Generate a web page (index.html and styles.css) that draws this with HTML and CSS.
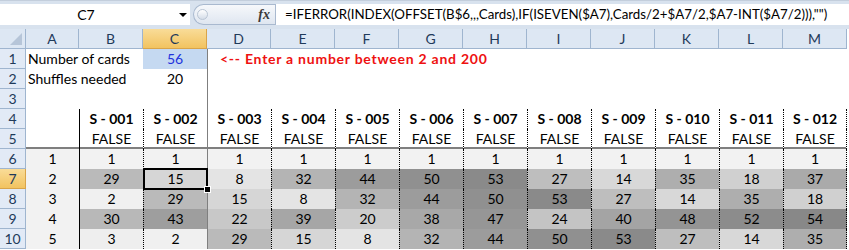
FILE: index.html
```html
<!DOCTYPE html>
<html lang="en">
<head>
    <meta charset="UTF-8">
    <meta name="viewport" content="width=device-width, initial-scale=1.0">
    <title>Card Shuffles</title>
    <link rel="stylesheet" href="styles.css">
</head>
<body>
    <div class="formula-bar">
        <div class="name-box">
            <span class="name">C7</span>
            <span class="drop"></span>
        </div>
        <div class="fx-box">
            <span class="knob"></span>
            <span class="fx">fx</span>
        </div>
        <div class="formula">=IFERROR(INDEX(OFFSET(B$6,,,Cards),IF(ISEVEN($A7),Cards/2+$A7/2,$A7-INT($A7/2))),"")</div>
    </div>

    <div class="sheet">
        <!-- column headers -->
        <div class="corner">
            <svg width="12" height="12" viewBox="0 0 12 12"><polygon points="12,0 12,12 0,12" fill="#b6c5d8"/></svg>
        </div>
        <div class="ch">A</div>
        <div class="ch">B</div>
        <div class="ch active">C</div>
        <div class="ch">D</div>
        <div class="ch">E</div>
        <div class="ch">F</div>
        <div class="ch">G</div>
        <div class="ch">H</div>
        <div class="ch">I</div>
        <div class="ch">J</div>
        <div class="ch">K</div>
        <div class="ch">L</div>
        <div class="ch">M</div>

        <!-- row 1 -->
        <div class="rh">1</div>
        <div class="cell l span2">Number of cards</div>
        <div class="cell c input">56</div>
        <div class="cell gl note span10">&lt;-- Enter a number between 2 and 200</div>

        <!-- row 2 -->
        <div class="rh">2</div>
        <div class="cell l span2">Shuffles needed</div>
        <div class="cell c">20</div>
        <div class="cell gl span10"></div>

        <!-- row 3 -->
        <div class="rh">3</div>
        <div class="cell span3"></div>
        <div class="cell gl span10"></div>

        <!-- row 4 -->
        <div class="rh">4</div>
        <div class="cell"></div>
        <div class="cell c b sl">S - 001</div>
        <div class="cell c b dl">S - 002</div>
        <div class="cell c b gl">S - 003</div>
        <div class="cell c b dl">S - 004</div>
        <div class="cell c b dl">S - 005</div>
        <div class="cell c b dl">S - 006</div>
        <div class="cell c b dl">S - 007</div>
        <div class="cell c b dl">S - 008</div>
        <div class="cell c b dl">S - 009</div>
        <div class="cell c b dl">S - 010</div>
        <div class="cell c b dl">S - 011</div>
        <div class="cell c b dl dr">S - 012</div>

        <!-- row 5 -->
        <div class="rh">5</div>
        <div class="cell bb"></div>
        <div class="cell c sl bb">FALSE</div>
        <div class="cell c dl bb">FALSE</div>
        <div class="cell c gl bb">FALSE</div>
        <div class="cell c dl bb">FALSE</div>
        <div class="cell c dl bb">FALSE</div>
        <div class="cell c dl bb">FALSE</div>
        <div class="cell c dl bb">FALSE</div>
        <div class="cell c dl bb">FALSE</div>
        <div class="cell c dl bb">FALSE</div>
        <div class="cell c dl bb">FALSE</div>
        <div class="cell c dl bb">FALSE</div>
        <div class="cell c dl dr bb">FALSE</div>

        <!-- row 6 -->
        <div class="rh">6</div>
        <div class="cell c idx">1</div>
        <div class="cell c sl" style="background:#f2f2f2">1</div>
        <div class="cell c dl" style="background:#f2f2f2">1</div>
        <div class="cell c gl" style="background:#f2f2f2">1</div>
        <div class="cell c dl" style="background:#f2f2f2">1</div>
        <div class="cell c dl" style="background:#f2f2f2">1</div>
        <div class="cell c dl" style="background:#f2f2f2">1</div>
        <div class="cell c dl" style="background:#f2f2f2">1</div>
        <div class="cell c dl" style="background:#f2f2f2">1</div>
        <div class="cell c dl" style="background:#f2f2f2">1</div>
        <div class="cell c dl" style="background:#f2f2f2">1</div>
        <div class="cell c dl" style="background:#f2f2f2">1</div>
        <div class="cell c dl dr" style="background:#f2f2f2">1</div>

        <!-- row 7 -->
        <div class="rh active">7</div>
        <div class="cell c idx">2</div>
        <div class="cell c sl" style="background:#bababa">29</div>
        <div class="cell c dl selected" style="background:#d6d6d6">15</div>
        <div class="cell c gl" style="background:#e4e4e4">8</div>
        <div class="cell c dl" style="background:#b4b4b4">32</div>
        <div class="cell c dl" style="background:#9c9c9c">44</div>
        <div class="cell c dl" style="background:#909090">50</div>
        <div class="cell c dl" style="background:#8a8a8a">53</div>
        <div class="cell c dl" style="background:#bebebe">27</div>
        <div class="cell c dl" style="background:#d8d8d8">14</div>
        <div class="cell c dl" style="background:#aeaeae">35</div>
        <div class="cell c dl" style="background:#d0d0d0">18</div>
        <div class="cell c dl dr" style="background:#aaaaaa">37</div>

        <!-- row 8 -->
        <div class="rh">8</div>
        <div class="cell c idx">3</div>
        <div class="cell c sl" style="background:#f0f0f0">2</div>
        <div class="cell c dl" style="background:#bababa">29</div>
        <div class="cell c gl" style="background:#d6d6d6">15</div>
        <div class="cell c dl" style="background:#e4e4e4">8</div>
        <div class="cell c dl" style="background:#b4b4b4">32</div>
        <div class="cell c dl" style="background:#9c9c9c">44</div>
        <div class="cell c dl" style="background:#909090">50</div>
        <div class="cell c dl" style="background:#8a8a8a">53</div>
        <div class="cell c dl" style="background:#bebebe">27</div>
        <div class="cell c dl" style="background:#d8d8d8">14</div>
        <div class="cell c dl" style="background:#aeaeae">35</div>
        <div class="cell c dl dr" style="background:#d0d0d0">18</div>

        <!-- row 9 -->
        <div class="rh">9</div>
        <div class="cell c idx">4</div>
        <div class="cell c sl" style="background:#b8b8b8">30</div>
        <div class="cell c dl" style="background:#9e9e9e">43</div>
        <div class="cell c gl" style="background:#c8c8c8">22</div>
        <div class="cell c dl" style="background:#a6a6a6">39</div>
        <div class="cell c dl" style="background:#cccccc">20</div>
        <div class="cell c dl" style="background:#a8a8a8">38</div>
        <div class="cell c dl" style="background:#969696">47</div>
        <div class="cell c dl" style="background:#c4c4c4">24</div>
        <div class="cell c dl" style="background:#a4a4a4">40</div>
        <div class="cell c dl" style="background:#949494">48</div>
        <div class="cell c dl" style="background:#8c8c8c">52</div>
        <div class="cell c dl dr" style="background:#888888">54</div>

        <!-- row 10 -->
        <div class="rh">10</div>
        <div class="cell c idx">5</div>
        <div class="cell c sl" style="background:#eeeeee">3</div>
        <div class="cell c dl" style="background:#f0f0f0">2</div>
        <div class="cell c gl" style="background:#bababa">29</div>
        <div class="cell c dl" style="background:#d6d6d6">15</div>
        <div class="cell c dl" style="background:#e4e4e4">8</div>
        <div class="cell c dl" style="background:#b4b4b4">32</div>
        <div class="cell c dl" style="background:#9c9c9c">44</div>
        <div class="cell c dl" style="background:#909090">50</div>
        <div class="cell c dl" style="background:#8a8a8a">53</div>
        <div class="cell c dl" style="background:#bebebe">27</div>
        <div class="cell c dl" style="background:#d8d8d8">14</div>
        <div class="cell c dl dr" style="background:#aeaeae">35</div>
    </div>
</body>
</html>
```

FILE: styles.css
```css
body {
    margin: 0;
    background-color: #ffffff;
    font-family: Lato, 'Noto Sans', sans-serif;
    font-size: 14px;
    color: #000000;
}

/* formula bar */

.formula-bar {
    display: flex;
    height: 21px;
    padding: 3px 0 4px;
    border-top: 1px solid #c3cedc;
    background-color: #d8e2ee;
}

.name-box {
    display: flex;
    align-items: center;
    width: 190px;
    background-color: #ffffff;
}

.name-box .name {
    flex: 1;
    padding-right: 7px;
    text-align: center;
}

.name-box .drop {
    width: 0;
    height: 0;
    margin-right: 3px;
    border-left: 4px solid transparent;
    border-right: 4px solid transparent;
    border-top: 4px solid #000000;
}

.fx-box {
    display: flex;
    align-items: center;
    justify-content: space-between;
    box-sizing: border-box;
    width: 82px;
    margin-left: 3px;
    padding: 0 5px 0 3px;
    border: 1px solid #a9b9cf;
    border-right: none;
    border-radius: 11px 0 0 11px;
    background: linear-gradient(#f6f8fb, #dfe6f0);
}

.fx-box .knob {
    width: 9px;
    height: 9px;
    border: 1px solid #b9c5d4;
    border-radius: 50%;
    background: linear-gradient(#ffffff, #d5dde8);
}

.fx-box .fx {
    font-family: 'Liberation Serif', serif;
    font-style: italic;
    font-weight: bold;
    font-size: 14px;
    color: #3a3a3a;
}

.formula {
    flex: 1;
    padding-left: 9px;
    font-size: 13.3px;
    line-height: 21px;
    border-left: 1px solid #a9b9cf;
    background-color: #ffffff;
    white-space: nowrap;
    overflow: hidden;
}

/* sheet grid */

.sheet {
    display: grid;
    grid-template-columns: 26px 53px repeat(12, 64px);
    grid-auto-rows: 20px;
}

.sheet > div {
    box-sizing: border-box;
    line-height: 20px;
    white-space: nowrap;
    overflow: hidden;
}

.corner,
.ch,
.rh {
    background-color: #dde7f3;
    border-right: 1px solid #9fb5cf;
    border-bottom: 1px solid #9fb5cf;
    color: #1f3a5a;
    text-align: center;
}

.corner {
    display: flex;
    align-items: flex-end;
    justify-content: flex-end;
    padding: 0 3px 3px 0;
}

.corner svg {
    display: block;
}

.ch {
    line-height: 19px;
}

.rh {
    background-color: #e2eaf6;
    line-height: 19px;
}

.ch.active,
.rh.active {
    background: linear-gradient(#f9dc98, #f2c360);
    border-color: #d9a449;
}

.span2 { grid-column: span 2; }
.span3 { grid-column: span 3; }
.span10 { grid-column: span 10; }

.c { text-align: center; }
.l { padding-left: 2px; }
.b { font-weight: bold; }

.sl { border-left: 1px solid #000000; }
.gl { border-left: 1px solid #7f7f7f; }
.dl { border-left: 1px dotted #000000; }
.dr { border-right: 1px dotted #000000; }
.bb { box-shadow: inset 0 -2px 0 #7f7f7f; }

.input {
    background-color: #c5d9f1;
    color: #2233dd;
}

.note {
    padding-left: 12px;
    color: #ee1111;
    font-weight: bold;
    letter-spacing: 0.75px;
}

.idx {
    background-color: #f2f2f2;
}

.sheet > .selected {
    position: relative;
    overflow: visible;
}

.selected::after {
    content: '';
    position: absolute;
    top: -1px;
    left: -1px;
    right: -1px;
    bottom: -1px;
    border: 2px solid #000000;
}

.selected::before {
    content: '';
    position: absolute;
    right: -4px;
    bottom: -4px;
    width: 5px;
    height: 5px;
    background-color: #000000;
    border: 1px solid #ffffff;
    z-index: 1;
}
```
